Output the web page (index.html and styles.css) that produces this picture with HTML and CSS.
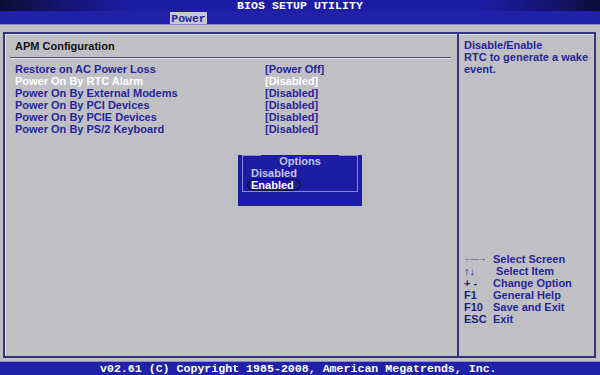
FILE: index.html
```html
<!DOCTYPE html>
<html>
<head>
<meta charset="utf-8">
<link rel="stylesheet" href="styles.css">
</head>
<body>
<div class="screen">
  <div class="titlebar">BIOS SETUP UTILITY</div>
  <div class="menubar"><span class="tab">Power</span></div>
  <div class="main">
    <div class="left">
      <div class="heading">APM Configuration</div>
      <div class="rule"></div>
      <div class="rows">
        <div class="row"><span class="label">Restore on AC Power Loss</span><span class="value">[Power Off]</span></div>
        <div class="row active"><span class="label">Power On By RTC Alarm</span><span class="value">[Disabled]</span></div>
        <div class="row"><span class="label">Power On By External Modems</span><span class="value">[Disabled]</span></div>
        <div class="row"><span class="label">Power On By PCI Devices</span><span class="value">[Disabled]</span></div>
        <div class="row"><span class="label">Power On By PCIE Devices</span><span class="value">[Disabled]</span></div>
        <div class="row"><span class="label">Power On By PS/2 Keyboard</span><span class="value">[Disabled]</span></div>
      </div>
      <div class="popup">
        <div class="popup-frame">
          <div class="popup-title">Options</div>
          <div class="opt">Disabled</div>
          <div class="opt sel">Enabled</div>
        </div>
      </div>
    </div>
    <div class="right">
      <div class="help">Disable/Enable<br>RTC to generate a wake<br>event.</div>
      <div class="keys">
        <div class="key"><span class="k">&#8592;&#8212;&#8594;</span><span class="d">Select Screen</span></div>
        <div class="key"><span class="k">&#8593;&#8595;</span><span class="d">&nbsp;Select Item</span></div>
        <div class="key"><span class="k">+ -</span><span class="d">Change Option</span></div>
        <div class="key"><span class="k">F1</span><span class="d">General Help</span></div>
        <div class="key"><span class="k">F10</span><span class="d">Save and Exit</span></div>
        <div class="key"><span class="k">ESC</span><span class="d">Exit</span></div>
      </div>
    </div>
  </div>
  <div class="footer">v02.61 (C) Copyright 1985-2008, American Megatrends, Inc.</div>
</div>
</body>
</html>
```
FILE: styles.css
```css
html, body {
  margin: 0;
  padding: 0;
}
body {
  width: 600px;
  height: 375px;
  overflow: hidden;
  background: #c0c0c4;
}
.screen {
  width: 600px;
  height: 375px;
  display: flex;
  flex-direction: column;
  background: #c0c0c4;
  font-family: "Liberation Sans", Arial, sans-serif;
}
.titlebar {
  height: 11px;
  line-height: 12px;
  text-align: center;
  color: #ffffff;
  font-family: "Liberation Mono", monospace;
  font-weight: bold;
  font-size: 11.5px;
  letter-spacing: 0.1px;
  background: linear-gradient(90deg, #0c0c30 0%, #141470 10%, #1c1ca4 22%, #1c1ca4 80%, #141470 92%, #0c0c34 100%);
}
.menubar {
  height: 13px;
  background: #2020a8;
  border-bottom: 1px solid #8c8cc8;
  display: flex;
  align-items: flex-end;
  padding-left: 170px;
}
.tab {
  height: 12px;
  width: 37px;
  background: #c8c8d0;
  color: #2424a0;
  font-family: "Liberation Mono", monospace;
  font-weight: bold;
  font-size: 11.5px;
  line-height: 13px;
  text-align: center;
}
.main {
  margin: 7px 4px 0 3px;
  height: 322px;
  border: 2px solid #34347c;
  box-shadow: inset 1px 1px 0 #e0e0ea;
  display: flex;
}
.left {
  position: relative;
  width: 452px;
  border-right: 2px solid #34347c;
}
.heading {
  margin: 6px 0 0 10px;
  font-weight: bold;
  font-size: 11px;
  line-height: 13px;
  color: #111111;
}
.rule {
  margin: 4px 6px 0 5px;
  height: 1px;
  background: #4a4a6a;
  border-bottom: 1px solid #e4e4ea;
}
.rows {
  margin-top: 4px;
  display: flex;
  flex-direction: column;
}
.row {
  display: flex;
  height: 12px;
  line-height: 12px;
  font-weight: bold;
  font-size: 11px;
  color: #26269a;
}
.row.active {
  color: #ffffff;
}
.label {
  width: 250px;
  padding-left: 10px;
}
.popup {
  position: absolute;
  left: 233px;
  top: 121px;
  width: 124px;
  height: 51px;
  background: #1c1ca4;
  box-sizing: border-box;
  padding: 7px 4px 6px 4px;
}
.popup-frame {
  position: relative;
  height: 37px;
  border: 1px solid #8a8ad8;
  border-top: none;
  box-sizing: border-box;
}
.popup-frame::before {
  content: "";
  position: absolute;
  left: -1px;
  top: 0;
  width: 19px;
  height: 1px;
  background: #8a8ad8;
}
.popup-frame::after {
  content: "";
  position: absolute;
  right: -1px;
  top: 0;
  width: 19px;
  height: 1px;
  background: #8a8ad8;
}
.popup-title {
  margin-top: -7px;
  text-align: center;
  font-weight: bold;
  font-size: 11px;
  line-height: 12px;
  color: #c4c4f0;
}
.opt {
  padding-left: 8px;
  font-weight: bold;
  font-size: 11px;
  line-height: 12px;
  color: #c8c8ec;
}
.opt.sel {
  color: #ffffff;
  width: 50px;
  margin-left: 4px;
  padding-left: 4px;
  border-radius: 8px / 6px;
  box-shadow: inset 0 0 0 1px #0a0a40;
  background: #1a1a96;
}
.right {
  flex: 1;
  display: flex;
  flex-direction: column;
  padding-left: 5px;
}
.help {
  margin-top: 5px;
  font-weight: bold;
  font-size: 11px;
  line-height: 12px;
  color: #26269a;
}
.keys {
  margin-top: 178px;
  display: flex;
  flex-direction: column;
}
.key {
  display: flex;
  height: 12px;
  line-height: 12px;
  font-weight: bold;
  font-size: 11px;
  color: #26269a;
}
.k {
  width: 29px;
  color: #1e1e80;
}
.key:first-child .k {
  font-size: 8px;
  font-weight: normal;
  letter-spacing: -1px;
}
.footer {
  margin-top: 3px;
  height: 13px;
  border-top: 1px solid #8c8cc8;
  background: #2020a8;
  color: #ffffff;
  font-family: "Liberation Mono", monospace;
  font-weight: bold;
  font-size: 11.6px;
  line-height: 14px;
  padding-left: 100px;
  white-space: nowrap;
}
```
